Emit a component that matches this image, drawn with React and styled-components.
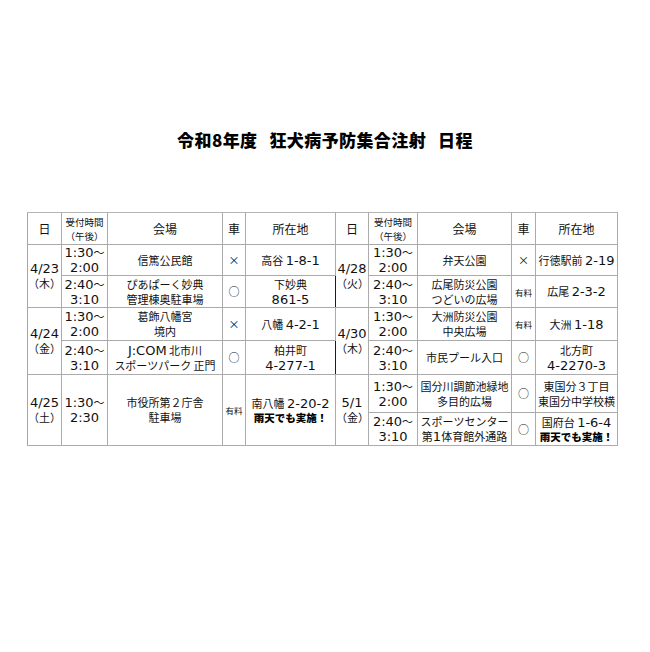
import React from "react";
import styled, { createGlobalStyle } from "styled-components";

const GlobalStyle = createGlobalStyle`
  html, body {
    margin: 0;
    padding: 0;
    background: #fff;
  }
`;

const Page = styled.div`
  width: 650px;
  height: 652px;
  box-sizing: border-box;
  padding-top: 129px;
  background: #fff;
`;

const Title = styled.h1`
  margin: 0 0 61px;
  text-align: center;
  font-family: "Noto Sans CJK JP", sans-serif;
  font-weight: 900;
  font-size: 17px;
  line-height: 22px;
  color: #000;
  letter-spacing: 0.4px;
`;

const TitleGap = styled.span`
  display: inline-block;
  width: 12px;
`;

const Table = styled.table`
  margin-left: 27px;
  width: 590px;
  table-layout: fixed;
  border-collapse: collapse;
  border: 1.5px solid #1c1c1c;
  font-family: "Noto Sans CJK JP", sans-serif;
  font-size: 11px;
  line-height: 15px;
  color: #111;
`;

const Row = styled.tr`
  height: ${({ $h }) => $h}px;
`;

const Cell = styled.td`
  padding: 0;
  text-align: center;
  vertical-align: middle;
  white-space: nowrap;
  overflow: visible;
  border: 1px solid #ababab;
  border-top: ${({ $top }) =>
    $top ? "1.5px solid #1c1c1c" : "1px solid #b5b5b5"};
  border-left: ${({ $divider }) =>
    $divider ? "1.5px solid #1c1c1c" : "1px solid #a5a5a5"};
`;

const Head = styled(Cell).attrs({ as: "th" })`
  font-weight: 400;
  font-size: 12px;
`;

const SmallHead = styled.span`
  display: block;
  font-size: 9.5px;
  line-height: 14px;
`;

const Lat = styled.span`
  font-family: "DejaVu Sans", sans-serif;
  font-size: 13px;
`;

const Bold = styled.span`
  display: block;
  font-weight: 900;
  font-size: 10.5px;
  line-height: 14px;
  color: #000;
`;

const Fee = styled.span`
  font-size: 8.5px;
`;

const runs = (s) =>
  s.split(/([A-Za-z0-9:\-/]+)/).map((part, i) =>
    i % 2 === 1 ? <Lat key={i}>{part}</Lat> : part
  );

const Lines = ({ lines }) =>
  lines.map((l, i) => (
    <React.Fragment key={i}>
      {i > 0 && <br />}
      {runs(l)}
    </React.Fragment>
  ));

const Car = ({ v }) => (v === "有料" ? <Fee>有料</Fee> : v);

const widths = [34, 46, 115, 23, 90, 33, 49, 94, 24, 82];

const HeadGroup = ({ divider }) => (
  <>
    <Head $divider={divider}>日</Head>
    <Head>
      <SmallHead>受付時間</SmallHead>
      <SmallHead>（午後）</SmallHead>
    </Head>
    <Head>会場</Head>
    <Head>車</Head>
    <Head>所在地</Head>
  </>
);

function App() {
  return (
    <>
      <GlobalStyle />
      <Page>
        <Title>
          令和8年度<TitleGap />狂犬病予防集合注射<TitleGap />日程
        </Title>
        <Table>
          <colgroup>
            {widths.map((w, i) => (
              <col key={i} style={{ width: w }} />
            ))}
          </colgroup>
          <tbody>
            <Row $h={32}>
              <HeadGroup />
              <HeadGroup divider />
            </Row>

            <Row $h={31}>
              <Cell $top rowSpan={2}>
                <Lines lines={["4/23", "（木）"]} />
              </Cell>
              <Cell $top><Lines lines={["1:30～", "2:00"]} /></Cell>
              <Cell $top><Lines lines={["信篤公民館"]} /></Cell>
              <Cell $top>×</Cell>
              <Cell $top><Lines lines={["高谷 1-8-1"]} /></Cell>
              <Cell $top $divider rowSpan={2}>
                <Lines lines={["4/28", "（火）"]} />
              </Cell>
              <Cell $top><Lines lines={["1:30～", "2:00"]} /></Cell>
              <Cell $top><Lines lines={["弁天公園"]} /></Cell>
              <Cell $top>×</Cell>
              <Cell $top><Lines lines={["行徳駅前 2-19"]} /></Cell>
            </Row>
            <Row $h={32}>
              <Cell><Lines lines={["2:40～", "3:10"]} /></Cell>
              <Cell><Lines lines={["ぴあぱーく妙典", "管理棟奥駐車場"]} /></Cell>
              <Cell>○</Cell>
              <Cell><Lines lines={["下妙典", "861-5"]} /></Cell>
              <Cell><Lines lines={["2:40～", "3:10"]} /></Cell>
              <Cell><Lines lines={["広尾防災公園", "つどいの広場"]} /></Cell>
              <Cell><Car v="有料" /></Cell>
              <Cell><Lines lines={["広尾 2-3-2"]} /></Cell>
            </Row>

            <Row $h={33}>
              <Cell $top rowSpan={2}>
                <Lines lines={["4/24", "（金）"]} />
              </Cell>
              <Cell $top><Lines lines={["1:30～", "2:00"]} /></Cell>
              <Cell $top><Lines lines={["葛飾八幡宮", "境内"]} /></Cell>
              <Cell $top>×</Cell>
              <Cell $top><Lines lines={["八幡 4-2-1"]} /></Cell>
              <Cell $top $divider rowSpan={2}>
                <Lines lines={["4/30", "（木）"]} />
              </Cell>
              <Cell $top><Lines lines={["1:30～", "2:00"]} /></Cell>
              <Cell $top><Lines lines={["大洲防災公園", "中央広場"]} /></Cell>
              <Cell $top><Car v="有料" /></Cell>
              <Cell $top><Lines lines={["大洲 1-18"]} /></Cell>
            </Row>
            <Row $h={34}>
              <Cell><Lines lines={["2:40～", "3:10"]} /></Cell>
              <Cell><Lines lines={["J:COM 北市川", "スポーツパーク 正門"]} /></Cell>
              <Cell>○</Cell>
              <Cell><Lines lines={["柏井町", "4-277-1"]} /></Cell>
              <Cell><Lines lines={["2:40～", "3:10"]} /></Cell>
              <Cell><Lines lines={["市民プール入口"]} /></Cell>
              <Cell>○</Cell>
              <Cell><Lines lines={["北方町", "4-2270-3"]} /></Cell>
            </Row>

            <Row $h={38}>
              <Cell $top rowSpan={2}>
                <Lines lines={["4/25", "（土）"]} />
              </Cell>
              <Cell $top rowSpan={2}><Lines lines={["1:30～", "2:30"]} /></Cell>
              <Cell $top rowSpan={2}><Lines lines={["市役所第２庁舎", "駐車場"]} /></Cell>
              <Cell $top rowSpan={2}><Car v="有料" /></Cell>
              <Cell $top rowSpan={2}>
                <Lines lines={["南八幡 2-20-2"]} />
                <Bold>雨天でも実施！</Bold>
              </Cell>
              <Cell $top $divider rowSpan={2}>
                <Lines lines={["5/1", "（金）"]} />
              </Cell>
              <Cell $top><Lines lines={["1:30～", "2:00"]} /></Cell>
              <Cell $top><Lines lines={["国分川調節池緑地", "多目的広場"]} /></Cell>
              <Cell $top>○</Cell>
              <Cell $top><Lines lines={["東国分３丁目", "東国分中学校横"]} /></Cell>
            </Row>
            <Row $h={33}>
              <Cell><Lines lines={["2:40～", "3:10"]} /></Cell>
              <Cell><Lines lines={["スポーツセンター", "第1体育館外通路"]} /></Cell>
              <Cell>○</Cell>
              <Cell>
                <Lines lines={["国府台 1-6-4"]} />
                <Bold>雨天でも実施！</Bold>
              </Cell>
            </Row>
          </tbody>
        </Table>
      </Page>
    </>
  );
}

export default App;
